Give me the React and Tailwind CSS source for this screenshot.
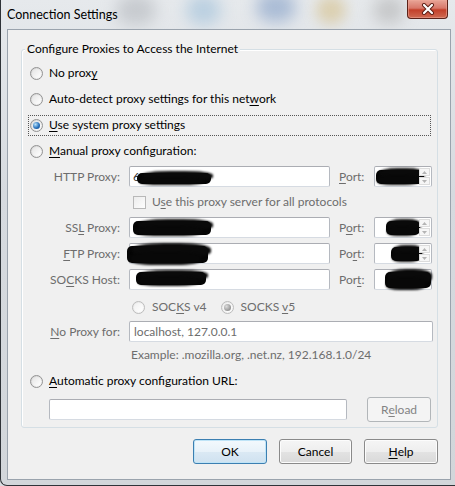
import React from "react";

const F = { fontFamily: "Lato, 'Liberation Sans', sans-serif" };

function U({ children }) {
  return <span className="underline underline-offset-[2px] decoration-[1px]">{children}</span>;
}

function Radio({ checked, disabled }) {
  return (
    <span
      className={
        "relative w-[13px] h-[13px] rounded-full border shrink-0 flex items-center justify-center " +
        (disabled
          ? "border-[#bcbcbc] bg-[linear-gradient(135deg,#e6e6e6,#fafafa)]"
          : "border-[#939393] bg-[linear-gradient(135deg,#d2d2d2,#f8f8f8)]")
      }
    >
      <span
        className={
          "w-[9px] h-[9px] rounded-full flex items-center justify-center " +
          (disabled ? "bg-[linear-gradient(135deg,#f0f0f0,#ffffff)]" : "bg-[linear-gradient(135deg,#e4e4e4,#ffffff)]")
        }
      >
        {checked && (
          <span
            className={
              "w-[7px] h-[7px] rounded-full " +
              (disabled
                ? "bg-[radial-gradient(circle_at_35%_35%,#dcdcdc,#959595_70%)]"
                : "bg-[radial-gradient(circle_at_35%_35%,#b9e3fb,#2a73bd_55%,#0c3d78)]")
            }
          />
        )}
      </span>
    </span>
  );
}

function Blob({ className }) {
  return (
    <div className={"absolute " + className}>
      <div className="absolute left-0 right-[3%] top-[12%] bottom-[8%] bg-[#050505] rounded-[5px] blur-[0.7px]" />
      <div className="absolute left-[6%] right-0 top-0 bottom-[30%] bg-[#0a0a0a] rounded-[40%] blur-[0.8px]" />
      <div className="absolute left-[3%] right-[12%] top-[40%] bottom-0 bg-[#080808] rounded-[35%] blur-[0.8px]" />
    </div>
  );
}

function TextBox({ w, children, spin }) {
  return (
    <div
      className={
        "relative h-[21px] bg-white border border-[#b5b9c0] border-t-[#abadb3] border-b-[#d6dbe2] rounded-[2px] shrink-0 " + w
      }
    >
      {children}
      {spin && (
        <div className="absolute right-[1px] top-[1px] bottom-[1px] w-[11px] flex flex-col gap-[1px]">
          <div className="flex-1 border border-[#dcdcdc] bg-[#f6f6f6] flex items-center justify-center">
            <svg width="5" height="3" viewBox="0 0 5 3"><path d="M0 3 L2.5 0 L5 3Z" fill="#b4b4b4" /></svg>
          </div>
          <div className="flex-1 border border-[#dcdcdc] bg-[#f6f6f6] flex items-center justify-center">
            <svg width="5" height="3" viewBox="0 0 5 3"><path d="M0 0 L2.5 3 L5 0Z" fill="#b4b4b4" /></svg>
          </div>
        </div>
      )}
    </div>
  );
}

function ProxyRow({ label, port, blob, portBlob, spin, pre }) {
  return (
    <div className="flex items-center h-[21px]">
      <div className="w-[98px] text-right text-[#6d6d6d]">{label}</div>
      <div className="ml-[9px]">
        <TextBox w="w-[201px]">
          {pre}
          {blob}
        </TextBox>
      </div>
      <div className="ml-[9px] w-[35px] text-[#6d6d6d]">{port}</div>
      <TextBox w="w-[58px]" spin={spin}>
        {portBlob}
      </TextBox>
    </div>
  );
}

function Btn({ children, w, def, disabled }) {
  return (
    <div
      className={
        "h-[25px] rounded-[3px] border flex items-center justify-center " +
        w +
        " " +
        (disabled
          ? "border-[#b2b6b9] bg-[#f4f4f4] text-[#838383]"
          : def
          ? "border-[#3c7fb1] bg-[linear-gradient(#f3f9fd_0%,#e8f2f9_50%,#dbe9f4_50%,#cfe2f0_100%)] shadow-[inset_0_0_0_1px_#bfe4f7]"
          : "border-[#8a8a8a] bg-[linear-gradient(#f5f5f5_0%,#eeeeee_50%,#e3e3e3_50%,#d9d9d9_100%)] shadow-[inset_0_0_0_1px_#fcfcfc]")
      }
    >
      {children}
    </div>
  );
}

export default function App() {
  return (
    <div className="w-[455px] h-[486px] overflow-hidden bg-[#d9dde1] text-[12px] leading-[16px] text-[#111]" style={F}>
      <div className="relative w-[470px] h-[486px] border-l border-b border-[#2f3338] rounded-bl-[7px] bg-[linear-gradient(#e6e9ec,#d6dadf_40%,#d2d6da)]">
        {/* blurred glass background */}
        <div className="absolute left-[115px] top-[-5px] w-[40px] h-[30px] rounded-full bg-[#a9adb3] opacity-50 blur-[8px]" />
        <div className="absolute left-[185px] top-[-5px] w-[35px] h-[30px] rounded-full bg-[#8fb7d6] opacity-50 blur-[8px]" />
        <div className="absolute left-[255px] top-[-8px] w-[40px] h-[30px] rounded-full bg-[#6e8fbf] opacity-50 blur-[8px]" />
        <div className="absolute left-[315px] top-[-4px] w-[30px] h-[28px] rounded-full bg-[#d5bf88] opacity-60 blur-[7px]" />
        <div className="absolute left-[372px] top-[-4px] w-[32px] h-[28px] rounded-full bg-[#a6a6a6] opacity-50 blur-[8px]" />

        {/* title bar */}
        <div className="relative h-[29px] flex items-start justify-between w-[454px]">
          <div className="pl-[6px] pt-[7px] text-[#000] text-[12.5px]">Connection Settings</div>
          <div className="mr-[7px] w-[41px] h-[19px] rounded-b-[4px] border border-t-0 border-[#5b2219] bg-[linear-gradient(#e8a597_0%,#d8786a_45%,#c3402a_55%,#cf6a52_100%)] flex items-center justify-center shadow-[inset_0_0_0_1px_#eea99a88]">
            <svg width="14" height="12" viewBox="0 0 14 12">
              <path d="M3 2 L11 10 M11 2 L3 10" stroke="#5a1c12" strokeWidth="4" strokeLinecap="round" />
              <path d="M3 2 L11 10 M11 2 L3 10" stroke="#ffffff" strokeWidth="2.2" strokeLinecap="round" />
            </svg>
          </div>
        </div>

        {/* client area */}
        <div className="relative ml-[6px] w-[444px] h-[451px] border border-[#9aa3ad] bg-[#f0f0f0]">
          {/* groupbox */}
          <div className="relative ml-[13px] mt-[19px] w-[417px] h-[379px] border border-[#d5dfe5] rounded-[3px] shadow-[inset_1px_1px_0_#ffffff]">
            <div className="absolute left-[3px] top-[-9px] px-[2px] bg-[#f0f0f0] text-[#000]">
              Configure Proxies to Access the Internet
            </div>

            <div className="pt-[10px] text-[#000]">
              {[
                { l: <>No prox<U>y</U></>, },
                { l: <>Auto-detect proxy settings for this net<U>w</U>ork</> },
                { l: <><U>U</U>se system proxy settings</>, c: true, focus: true },
                { l: <><U>M</U>anual proxy configuration:</> },
              ].map((r, i) => (
                <div key={i} className="h-[26px] flex items-center">
                  <div
                    className={
                      "ml-[6px] w-[403px] h-[21px] flex items-center pl-[1px] border border-dotted " +
                      (r.focus ? "border-[#555]" : "border-transparent")
                    }
                  >
                    <Radio checked={r.c} />
                    <span className="ml-[6px]">{r.l}</span>
                  </div>
                </div>
              ))}

              <div className="mt-[2px]">
                <ProxyRow
                  label={<>HTTP Proxy:</>}
                  port={<><U>P</U>ort:</>}
                  spin
                  pre={<span className="absolute left-[3px] top-[2px] text-[#333]">6</span>}
                  blob={<Blob className="left-[7px] top-[4px] w-[76px] h-[14px]" />}
                  portBlob={<Blob className="left-[1px] top-[1px] w-[49px] h-[17px]" />}
                />
              </div>

              <div className="h-[30px] flex items-center pl-[111px]">
                <span className="w-[13px] h-[13px] border border-[#b8b8b8] bg-[linear-gradient(135deg,#ececec,#fdfdfd)] shrink-0" />
                <span className="ml-[6px] text-[#6d6d6d]">
                  U<U>s</U>e this proxy server for all protocols
                </span>
              </div>

              <div className="flex flex-col gap-[5px]">
                <ProxyRow
                  label={<>SS<U>L</U> Proxy:</>}
                  port={<>P<U>o</U>rt:</>}
                  spin
                  blob={<Blob className="left-[3px] top-[1px] w-[80px] h-[17px]" />}
                  portBlob={<Blob className="left-[11px] top-[1px] w-[35px] h-[17px]" />}
                />
                <ProxyRow
                  label={<><U>F</U>TP Proxy:</>}
                  port={<>Po<U>r</U>t:</>}
                  spin
                  blob={<Blob className="left-[-3px] top-[-1px] w-[84px] h-[22px]" />}
                  portBlob={<Blob className="left-[16px] top-[1px] w-[32px] h-[17px]" />}
                />
                <ProxyRow
                  label={<>SO<U>C</U>KS Host:</>}
                  port={<>Por<U>t</U>:</>}
                  blob={<Blob className="left-[6px] top-[0px] w-[72px] h-[16px]" />}
                  portBlob={<Blob className="left-[10px] top-[-1px] w-[47px] h-[21px]" />}
                />
              </div>

              <div className="mt-[4px] h-[26px] flex items-center text-[#6d6d6d]">
                <div className="ml-[110px]">
                  <Radio disabled />
                </div>
                <span className="ml-[7px]">SOC<U>K</U>S v4</span>
                <div className="ml-[14px]">
                  <Radio disabled checked />
                </div>
                <span className="ml-[7px]">SOCKS <U>v</U>5</span>
              </div>

              <div className="mt-[1px] flex items-center h-[21px]">
                <div className="w-[98px] text-right text-[#6d6d6d]">
                  <U>N</U>o Proxy for:
                </div>
                <div className="ml-[9px]">
                  <TextBox w="w-[304px]">
                    <span className="absolute left-[4px] top-[2px] text-[#6d6d6d]">localhost, 127.0.0.1</span>
                  </TextBox>
                </div>
              </div>

              <div className="h-[26px] flex items-center pl-[109px] text-[#6d6d6d]">
                Example: .mozilla.org, .net.nz, 192.168.1.0/24
              </div>

              <div className="h-[26px] flex items-center">
                <div className="ml-[8px]">
                  <Radio />
                </div>
                <span className="ml-[6px]">
                  <U>A</U>utomatic proxy configuration URL:
                </span>
              </div>

              <div className="mt-[3px] flex items-center h-[25px]">
                <div className="ml-[27px]">
                  <TextBox w="w-[298px]" />
                </div>
                <div className="ml-[20px]">
                  <Btn w="w-[64px]" disabled>
                    R<U>e</U>load
                  </Btn>
                </div>
              </div>
            </div>
          </div>

          {/* buttons */}
          <div className="mt-[11px] flex justify-end gap-[12px] pr-[12px] text-[#000]">
            <Btn w="w-[74px]" def>OK</Btn>
            <Btn w="w-[73px]">Cancel</Btn>
            <Btn w="w-[74px]">
              <U>H</U>elp
            </Btn>
          </div>
        </div>
      </div>
    </div>
  );
}
